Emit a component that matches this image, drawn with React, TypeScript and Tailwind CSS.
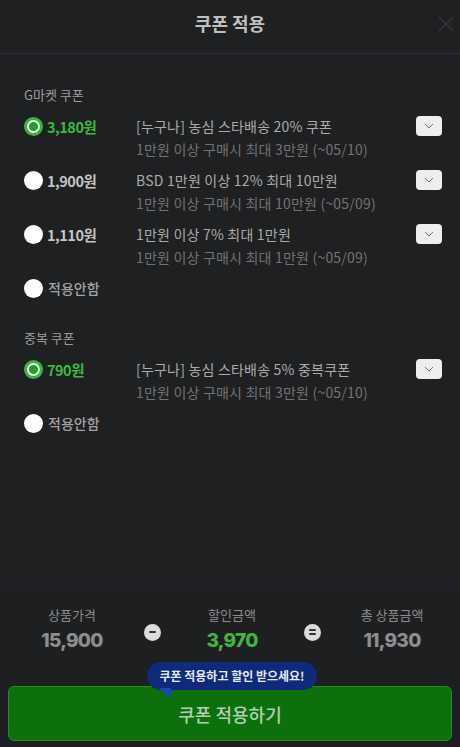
import React from 'react';

type Coupon = {
  price: string;
  title: string;
  sub: string;
};

const gmarket: Coupon[] = [
  { price: '3,180원', title: '[누구나] 농심 스타배송 20% 쿠폰', sub: '1만원 이상 구매시 최대 3만원 (~05/10)' },
  { price: '1,900원', title: 'BSD 1만원 이상 12% 최대 10만원', sub: '1만원 이상 구매시 최대 10만원 (~05/09)' },
  { price: '1,110원', title: '1만원 이상 7% 최대 1만원', sub: '1만원 이상 구매시 최대 1만원 (~05/09)' },
];

const dup: Coupon[] = [
  { price: '790원', title: '[누구나] 농심 스타배송 5% 중복쿠폰', sub: '1만원 이상 구매시 최대 3만원 (~05/10)' },
];

const font = { fontFamily: '"Noto Sans CJK KR", "Noto Sans", sans-serif' };

function Radio({ checked }: { checked: boolean }) {
  if (checked) {
    return (
      <span className="mt-[2px] flex h-[19px] w-[19px] shrink-0 items-center justify-center rounded-full border-[3px] border-[#35b83a] bg-white">
        <span className="h-[9px] w-[9px] rounded-full bg-[#1f9e25]" />
      </span>
    );
  }
  return <span className="mt-[2px] h-[19px] w-[19px] shrink-0 rounded-full bg-white" />;
}

function CouponRow({ c, checked }: { c: Coupon; checked: boolean }) {
  return (
    <div className="flex h-[54px] items-start">
      <Radio checked={checked} />
      <span
        className={`ml-[4px] w-[89px] text-[14.5px] font-bold leading-[23px] tracking-[-0.5px] ${
          checked ? 'text-[#3cb843]' : 'text-[#c4c4c4]'
        }`}
      >
        {c.price}
      </span>
      <div className="flex-1 text-[14px] leading-[23px] tracking-[0.2px]">
        <div className="text-[#ababab]">{c.title}</div>
        <div className="text-[#727272]">{c.sub}</div>
      </div>
      <button className="mt-[1px] flex h-[20px] w-[26px] items-center justify-center rounded-[4px] bg-[#eeeeee]">
        <svg width="10" height="6" viewBox="0 0 10 6" fill="none">
          <path d="M1 1l4 4 4-4" stroke="#777" strokeWidth="1" />
        </svg>
      </button>
    </div>
  );
}

function NoApply() {
  return (
    <div className="flex h-[34px] items-start">
      <Radio checked={false} />
      <span className="ml-[5px] text-[14px] font-medium leading-[23px] text-[#a2a2a2]">적용안함</span>
    </div>
  );
}

function Section({ label, items }: { label: string; items: Coupon[] }) {
  return (
    <div>
      <div className="mb-[11px] text-[13px] leading-[18px] text-[#9c9c9c]">{label}</div>
      {items.map((c, i) => (
        <CouponRow key={c.title} c={c} checked={i === 0} />
      ))}
      <NoApply />
    </div>
  );
}

function Op({ kind }: { kind: 'minus' | 'eq' }) {
  return (
    <span className="mt-[4px] flex h-[17px] w-[17px] items-center justify-center rounded-full bg-[#dcdcdc]">
      {kind === 'minus' ? (
        <span className="h-[2px] w-[7px] rounded bg-[#333]" />
      ) : (
        <span className="flex flex-col gap-[2px]">
          <span className="h-[2px] w-[7px] rounded bg-[#333]" />
          <span className="h-[2px] w-[7px] rounded bg-[#333]" />
        </span>
      )}
    </span>
  );
}

function Amount({ label, value, green }: { label: string; value: string; green?: boolean }) {
  return (
    <div className="flex flex-col items-center">
      <div className="text-[13px] leading-[18px] text-[#8c8c8c]">{label}</div>
      <div
        className={`mt-[4px] text-[19px] font-extrabold leading-[26px] tracking-[-0.7px] ${
          green ? 'text-[#3fb548]' : 'text-[#8d8d8d]'
        }`}
        style={{ fontFamily: 'Inter, "Noto Sans", sans-serif' }}
      >
        {value}
      </div>
    </div>
  );
}

export default function App() {
  return (
    <div className="flex h-[747px] w-[460px] flex-col bg-[#1f2022]" style={font}>
      <div className="relative flex h-[54px] shrink-0 items-center justify-center border-b border-[#2e2f32] pb-[6px]">
        <h1 className="text-[18px] font-bold text-[#c0c0c0]">쿠폰 적용</h1>
        <svg className="absolute right-[6px] top-[16px]" width="16" height="16" viewBox="0 0 16 16">
          <path d="M1 1l14 14M15 1L1 15" stroke="#37383b" strokeWidth="1.2" />
        </svg>
      </div>

      <div className="flex flex-1 flex-col gap-[18px] pl-[24px] pr-[18px] pt-[32px]">
        <Section label="G마켓 쿠폰" items={gmarket} />
        <Section label="중복 쿠폰" items={dup} />
      </div>

      <div className="shrink-0 border-t border-[#222326] bg-[#1e1f21] px-[8px] pb-[6px] pt-[16px]">
        <div className="grid grid-cols-[128px_32px_128px_32px_128px] items-center">
          <Amount label="상품가격" value="15,900" />
          <div className="flex justify-center">
            <Op kind="minus" />
          </div>
          <Amount label="할인금액" value="3,970" green />
          <div className="flex justify-center">
            <Op kind="eq" />
          </div>
          <Amount label="총 상품금액" value="11,930" />
        </div>

        <div className="relative mt-[32px]">
          <div className="absolute left-[139px] top-[-24px] z-10">
            <div className="flex h-[28px] w-[170px] items-center justify-center rounded-full bg-[#0f2a7a] text-[12px] font-bold text-[#e6e8f2]">
              쿠폰 적용하고 할인 받으세요!
            </div>
            <svg className="absolute left-[12px] top-[26px]" width="14" height="10" viewBox="0 0 14 10">
              <path d="M0 0h12l0 10z" fill="#1a48c0" />
            </svg>
          </div>
          <button className="flex h-[55px] w-full items-center justify-center rounded-[6px] border border-[#2a8a2a] bg-[#0c700c] pt-[2px] text-[18px] font-medium text-[#b4cdb4]">
            쿠폰 적용하기
          </button>
        </div>
      </div>
    </div>
  );
}
